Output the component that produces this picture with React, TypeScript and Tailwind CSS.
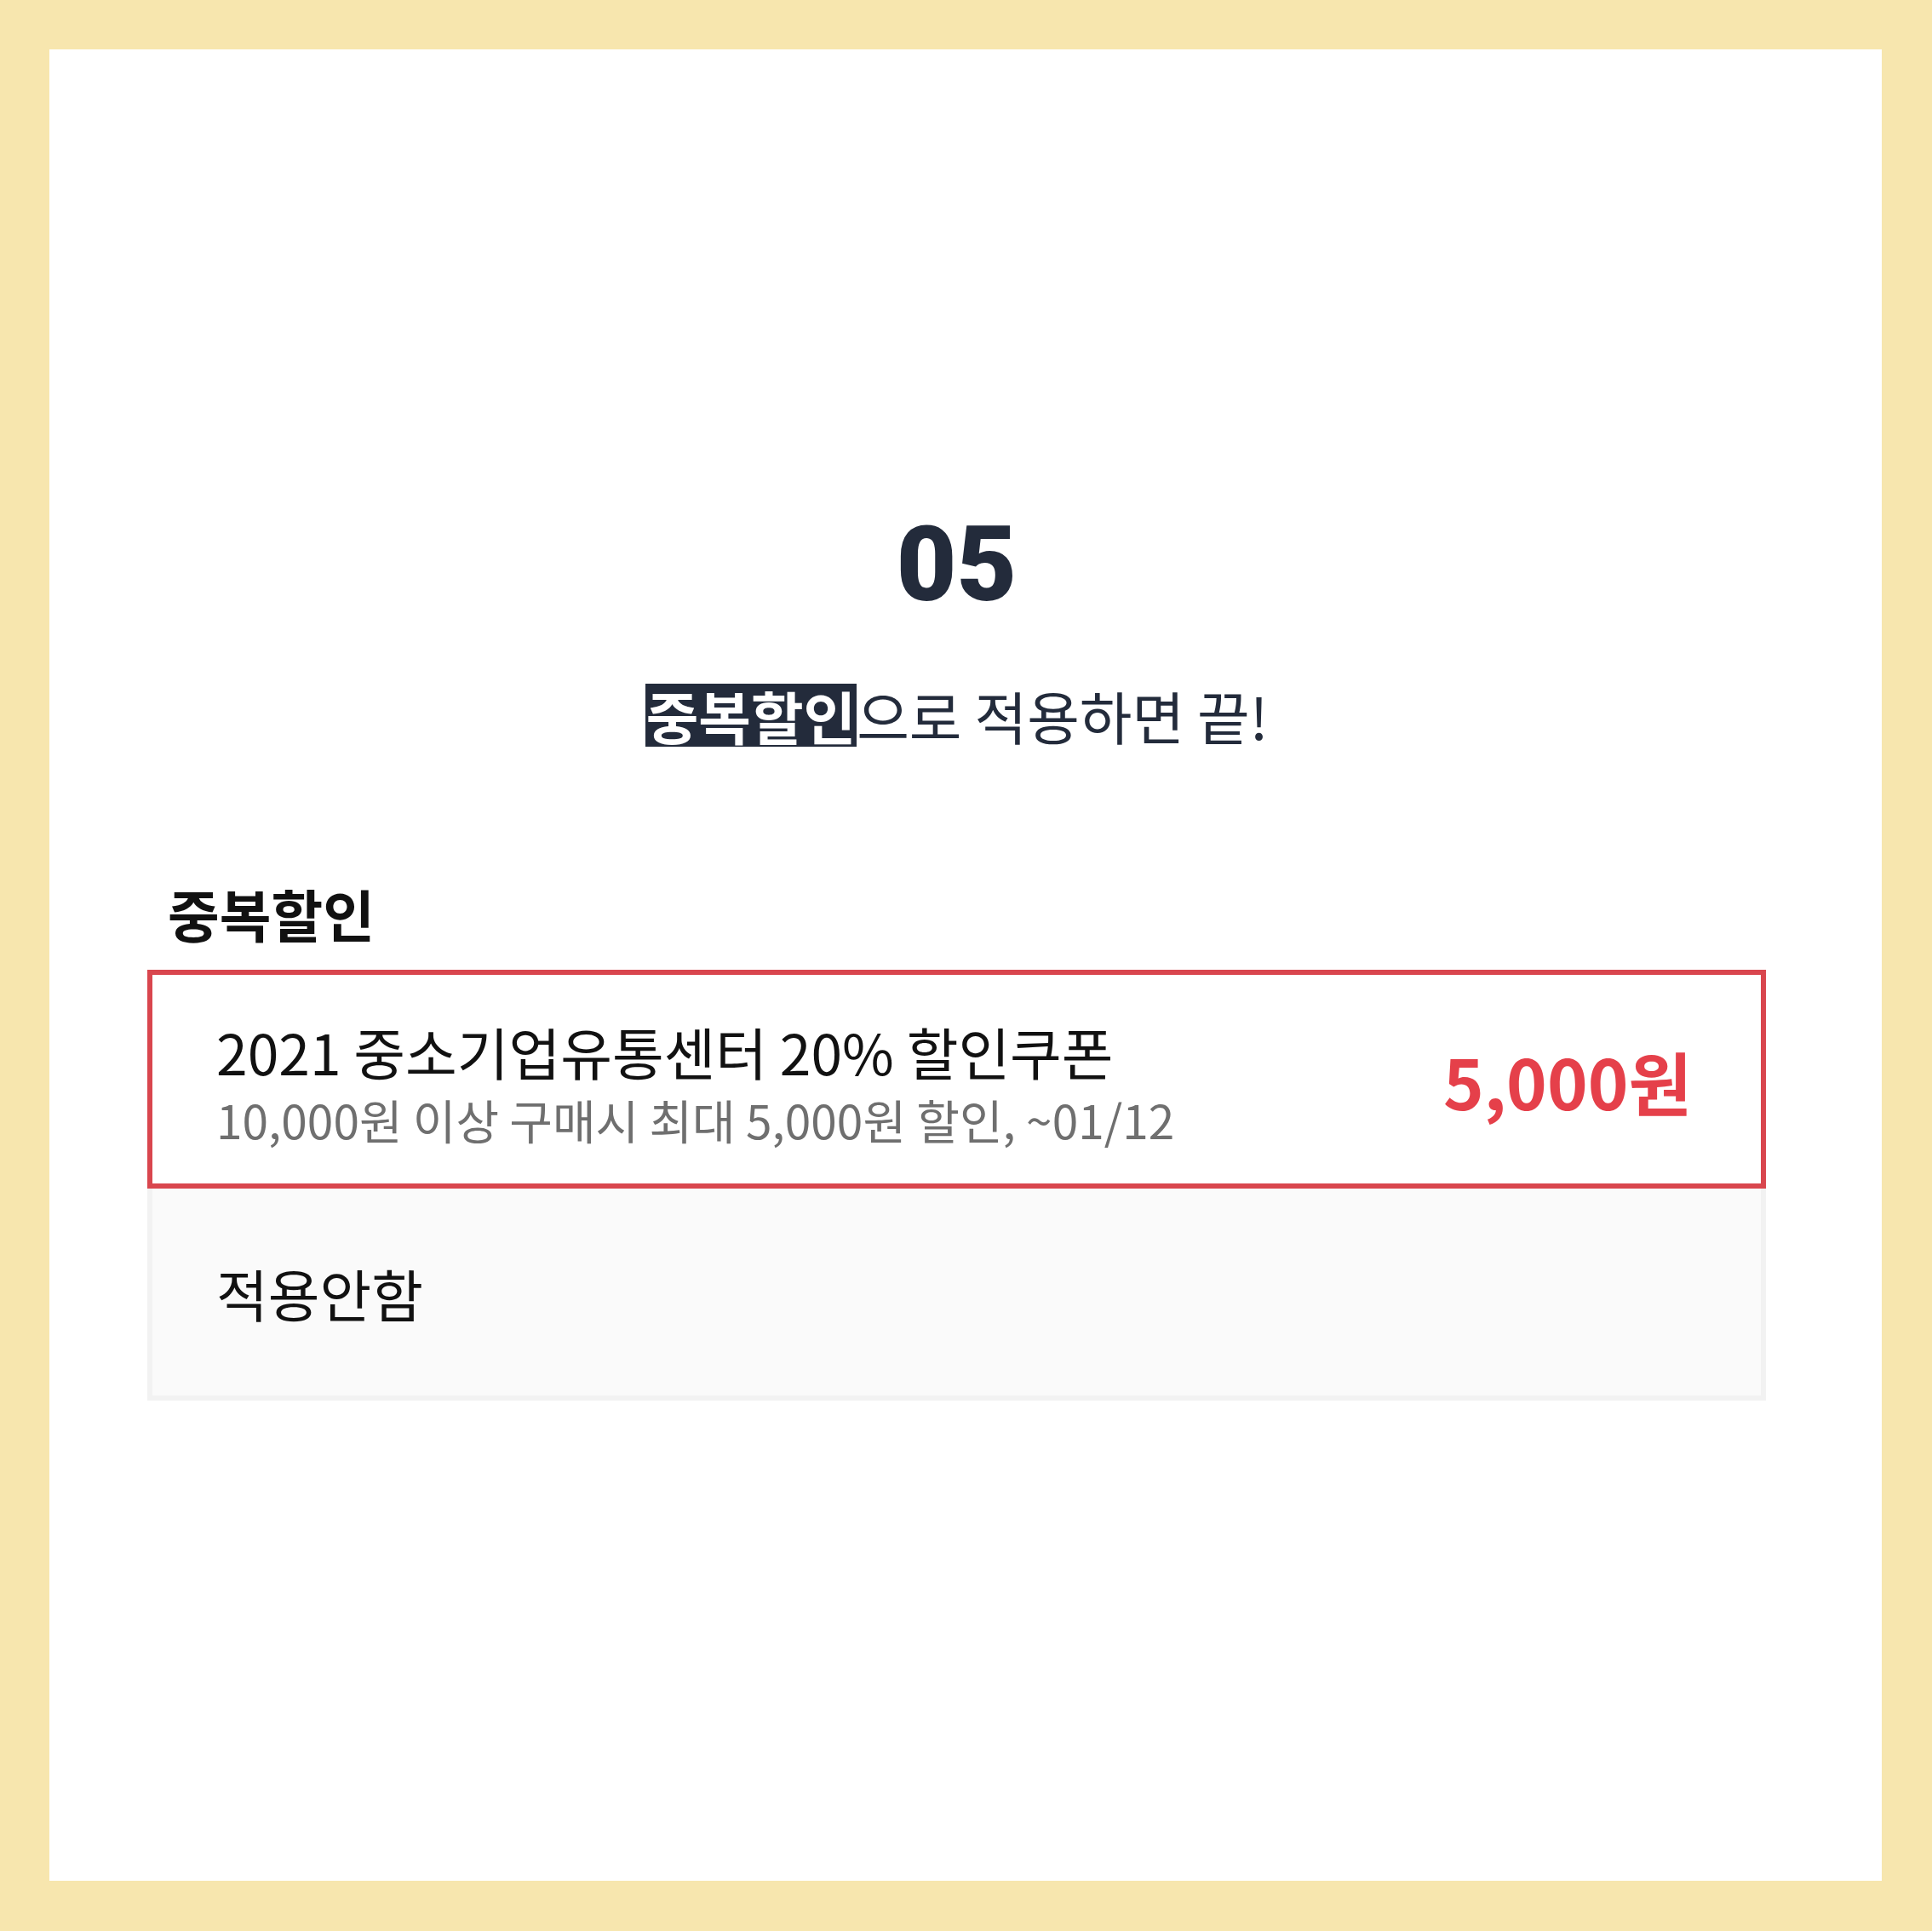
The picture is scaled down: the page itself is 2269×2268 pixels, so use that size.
const KR = { fontFamily: '"Noto Sans CJK KR", "Noto Sans", sans-serif' }

function CouponOption() {
  return (
    <div className="flex items-center justify-between border-[6px] border-[#d9464e] bg-white pl-[75px] pr-[81px] pt-[49px] pb-[36px]">
      <div className="flex flex-col">
        <span className="text-[66px] leading-[80px] text-[#111111]">2021 중소기업유통센터 20% 할인쿠폰</span>
        <span className="text-[55px] leading-[80px] text-[#6f6f6f]">10,000원 이상 구매시 최대 5,000원 할인, ~01/12</span>
      </div>
      <span className="mb-[12px] text-[81px] font-bold leading-none text-[#e5404a]">5,000원</span>
    </div>
  )
}

function NoneOption() {
  return (
    <div className="flex h-[249px] items-center border-x-[6px] border-b-[6px] border-[#f2f2f2] bg-[#fafafa] pl-[75px]">
      <span className="text-[66px] leading-none text-[#111111]">적용안함</span>
    </div>
  )
}

export default function App() {
  return (
    <div className="flex h-[2268px] w-[2269px] bg-[#f7e6ae] pt-[58px] pl-[58px] pr-[59px] pb-[59px]" style={KR}>
      <div className="flex flex-1 flex-col bg-white pt-[545px] pl-[115px] pr-[136px]">
        <div
          className="text-center text-[122px] font-black leading-none text-[#232b3b]"
          style={{ fontFamily: 'Roboto, "Liberation Sans", sans-serif' }}
        >
          05
        </div>

        <div className="mt-[78px] text-center text-[67px] leading-[74px] text-[#232b3b]">
          <span className="inline-block bg-[#232b3b] px-[1px] font-bold leading-[74px] text-white">중복할인</span>
          으로 적용하면 끝!
        </div>

        <div className="mt-[158px] pl-[24px] text-[66px] font-bold leading-[74px] text-[#111111]">중복할인</div>

        <div className="mt-[30px] flex flex-col">
          <CouponOption />
          <NoneOption />
        </div>
      </div>
    </div>
  )
}
